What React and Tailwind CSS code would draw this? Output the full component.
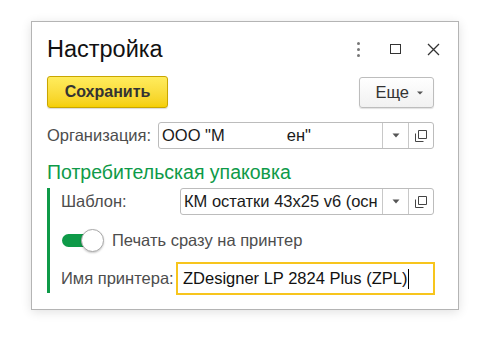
import React from "react";

const green = "border-[#0e9a48]";

function DropArrow() {
  return (
    <svg width="8" height="5" viewBox="0 0 8 5">
      <path d="M0.5 0.5h7L4 4.5z" fill="#555" />
    </svg>
  );
}

function OpenIcon() {
  return (
    <svg width="12" height="12" viewBox="0 0 12 12" fill="none" stroke="#444" strokeWidth="1">
      <path d="M3.5 0.5h8v8h-8z" />
      <path d="M0.5 3.5v8h8" />
    </svg>
  );
}

function Field({ children, className = "" }) {
  return (
    <div className={"flex h-[27px] min-w-0 flex-1 items-stretch rounded-[3px] border border-[#bcbcbc] bg-white " + className}>
      <div className="flex min-w-0 flex-1 items-center overflow-hidden whitespace-pre pl-[3px] text-[16.5px] text-[#1a1a1a]">
        {children}
      </div>
      <div className="flex w-[26px] shrink-0 items-center justify-center border-l border-[#c8c8c8]">
        <DropArrow />
      </div>
      <div className="flex w-[25px] shrink-0 items-center justify-center border-l border-[#c8c8c8]">
        <OpenIcon />
      </div>
    </div>
  );
}

export default function App() {
  return (
    <div className="h-[340px] w-[484px] bg-white pl-[31px] pt-[21px] font-['Liberation_Sans',Arial,sans-serif]">
      <div className="h-[289px] w-[428px] border border-[#b4b4b4] bg-white shadow-[0_2px_10px_rgba(0,0,0,0.12)]">
        {/* шапка */}
        <div className="flex items-center justify-between pl-[15px] pr-[18px] pt-[13px]">
          <div className="text-[23.5px] leading-[28px] text-[#111]">Настройка</div>
          <div className="flex items-center">
            <div className="flex flex-col gap-[3px]">
              <span className="h-[3px] w-[3px] rounded-full bg-[#777]" />
              <span className="h-[3px] w-[3px] rounded-full bg-[#777]" />
              <span className="h-[3px] w-[3px] rounded-full bg-[#777]" />
            </div>
            <div className="ml-[30px] h-[10px] w-[11px] border-[1.5px] border-[#333]" />
            <svg className="ml-[26px]" width="13" height="13" viewBox="0 0 13 13" stroke="#333" strokeWidth="1.3">
              <path d="M1 1l11 11M12 1L1 12" />
            </svg>
          </div>
        </div>

        <div className="pl-[15px] pr-[24px]">
          {/* кнопки */}
          <div className="mt-[13px] flex items-start justify-between">
            <button className="h-[32px] w-[121px] rounded-[3px] border border-[#c9a600] bg-gradient-to-b from-[#ffec5c] to-[#f5cf00] text-[16px] font-bold text-[#333] shadow-[0_1px_1px_rgba(0,0,0,0.15)]">
              Сохранить
            </button>
            <button className="mt-px flex h-[31px] w-[75px] items-center justify-end gap-[8px] rounded-[3px] border border-[#bdbdbd] bg-gradient-to-b from-white to-[#f1f1f1] pr-[10px] text-[16.5px] text-[#333] shadow-[0_1px_1px_rgba(0,0,0,0.12)]">
              Еще
              <svg width="6" height="4" viewBox="0 0 6 4">
                <path d="M0 0.5h6L3 3.5z" fill="#555" />
              </svg>
            </button>
          </div>

          {/* организация */}
          <div className="mt-[14px] flex items-center">
            <div className="w-[111px] shrink-0 text-[16.5px] text-[#4d4d4d]">Организация:</div>
            <Field>
              {'ООО "М'}
              <span className="ml-[62px]">{'ен"'}</span>
            </Field>
          </div>

          <div className="mt-[12px] text-[19.5px] leading-[22px] text-[#0e9a48]">Потребительская упаковка</div>

          <div className={"mt-[5px] border-l-[3px] pb-px pl-[11px] " + green}>
            <div className="mt-px flex items-center">
              <div className="w-[119px] shrink-0 text-[16.5px] text-[#4d4d4d]">Шаблон:</div>
              <Field>КМ остатки 43x25 v6 (осн</Field>
            </div>

            <div className="mt-[14px] flex h-[23px] items-center">
              <div className="relative h-[23px] w-[43px] shrink-0">
                <div className="absolute left-px top-[5px] h-[13px] w-[30px] rounded-full bg-[#0e9a48]" />
                <div className="absolute right-0 top-0 h-[23px] w-[23px] rounded-full border border-[#a8a8a8] bg-white shadow-[0_1px_2px_rgba(0,0,0,0.2)]" />
              </div>
              <div className="ml-[8px] text-[16.5px] text-[#4d4d4d]">Печать сразу на принтер</div>
            </div>

            <div className="mt-[13px] flex items-center">
              <div className="w-[115px] shrink-0 text-[16.5px] text-[#4d4d4d]">Имя принтера:</div>
              <div className="-my-[3px] flex h-[33px] w-[259px] shrink-0 items-center border-2 border-[#f7c51d] bg-white pl-[5px] text-[16.5px] text-[#111]">
                ZDesigner LP 2824 Plus (ZPL)
                <span className="ml-px h-[20px] w-px bg-black" />
              </div>
            </div>
          </div>
        </div>
      </div>
    </div>
  );
}
